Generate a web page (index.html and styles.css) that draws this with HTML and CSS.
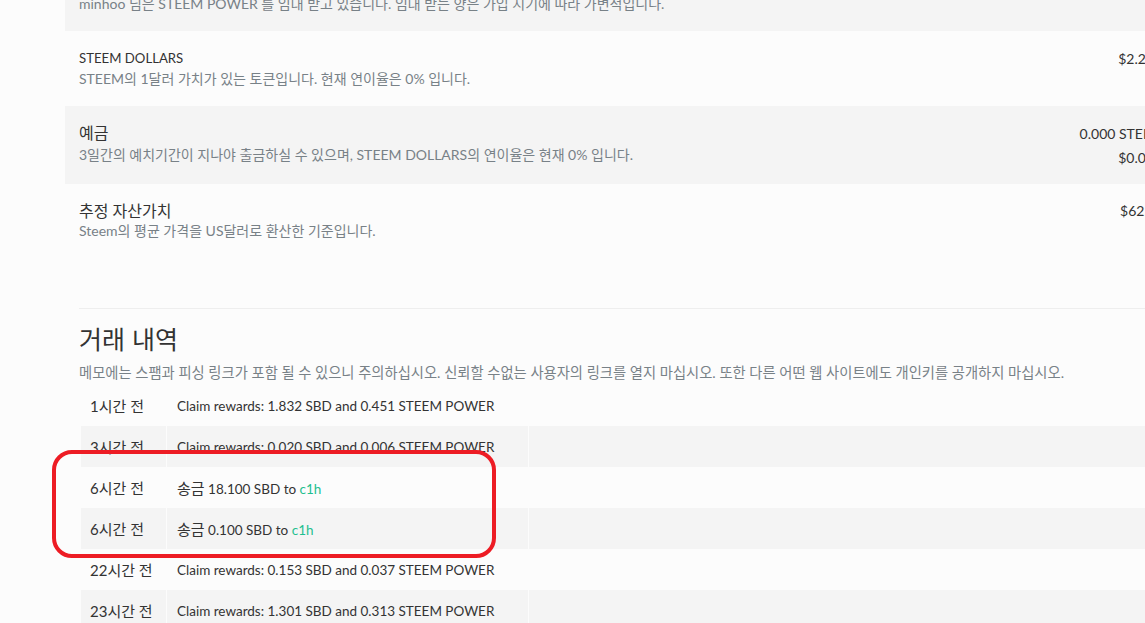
FILE: index.html
```html
<!DOCTYPE html>
<html lang="ko">
<head>
<meta charset="utf-8">
<title>Wallet</title>
<link rel="stylesheet" href="styles.css">
</head>
<body>
<div class="page">
  <section class="wallet">
    <div class="wrow gray first">
      <div class="wleft">
        <div class="wdesc">minhoo 님은 STEEM POWER 를 임대 받고 있습니다. 임대 받는 양은 가입 시기에 따라 가변적입니다.</div>
      </div>
    </div>
    <div class="wrow r2">
      <div class="wleft">
        <div class="wtitle">STEEM DOLLARS</div>
        <div class="wdesc">STEEM의 1달러 가치가 있는 토큰입니다. 현재 연이율은 0% 입니다.</div>
      </div>
      <div class="wright"><div class="val dd">$2.24</div></div>
    </div>
    <div class="wrow gray r3">
      <div class="wleft">
        <div class="wtitle ko">예금</div>
        <div class="wdesc d3">3일간의 예치기간이 지나야 출금하실 수 있으며, STEEM DOLLARS의 연이율은 현재 0% 입니다.</div>
      </div>
      <div class="wright">
        <div class="val two">0.000 STEEM</div>
        <div class="val two dd">$0.00</div>
      </div>
    </div>
    <div class="wrow r4">
      <div class="wleft">
        <div class="wtitle ko">추정 자산가치</div>
        <div class="wdesc">Steem의 평균 가격을 US달러로 환산한 기준입니다.</div>
      </div>
      <div class="wright"><div class="val">$62.35</div></div>
    </div>
  </section>

  <hr class="divider">

  <section class="history">
    <h2 class="htitle">거래 내역</h2>
    <p class="memo">메모에는 스팸과 피싱 링크가 포함 될 수 있으니 주의하십시오. 신뢰할 수없는 사용자의 링크를 열지 마십시오. 또한 다른 어떤 웹 사이트에도 개인키를 공개하지 마십시오.</p>
    <div class="twrap">
      <table class="tx">
        <tbody>
          <tr><td class="c1">1시간 전</td><td class="c2">Claim rewards: 1.832 SBD and 0.451 STEEM POWER</td><td class="c3"></td></tr>
          <tr><td class="c1">3시간 전</td><td class="c2">Claim rewards: 0.020 SBD and 0.006 STEEM POWER</td><td class="c3"></td></tr>
          <tr><td class="c1">6시간 전</td><td class="c2"><span class="ko">송금</span> 18.100 SBD to <a class="user" href="#">c1h</a></td><td class="c3"></td></tr>
          <tr><td class="c1">6시간 전</td><td class="c2"><span class="ko">송금</span> 0.100 SBD to <a class="user" href="#">c1h</a></td><td class="c3"></td></tr>
          <tr><td class="c1">22시간 전</td><td class="c2">Claim rewards: 0.153 SBD and 0.037 STEEM POWER</td><td class="c3"></td></tr>
          <tr><td class="c1">23시간 전</td><td class="c2">Claim rewards: 1.301 SBD and 0.313 STEEM POWER</td><td class="c3"></td></tr>
        </tbody>
      </table>
      <div class="annot"></div>
    </div>
  </section>
</div>
</body>
</html>
```

FILE: styles.css
```css
html, body {
  margin: 0;
  padding: 0;
  overflow: hidden;
}
body {
  background: #fcfcfc;
  font-family: "Lato", "Noto Sans CJK KR", sans-serif;
  color: #333;
  width: 1145px;
  height: 623px;
}
.page {
  margin-left: 65px;
  width: 1110px;
}
.wrow {
  display: flex;
  justify-content: space-between;
  padding: 16px 11px 14px 14px;
}
.wrow.gray { background: #f4f4f4; }
.wrow.first {
  margin-top: -6px;
  padding-top: 0;
  padding-bottom: 17px;
}
.wrow.r2 { padding-top: 17px; padding-bottom: 17px; }
.wrow.r4 { padding-top: 16px; padding-bottom: 16px; }
.wtitle {
  font-size: 13.2px;
  line-height: 21px;
  color: #333;
}
.wtitle.ko { font-size: 16px; }
.wdesc {
  font-size: 14px;
  line-height: 20px;
  color: #788187;
  white-space: nowrap;
}
.wdesc.d3 { margin-top: 2px; }
.wright {
  text-align: right;
}
.val {
  font-size: 14px;
  line-height: 21px;
  color: #333;
  white-space: nowrap;
}
.val.two { line-height: 24px; }
.val.dd { padding-right: 10px; }
.divider {
  border: 0;
  border-top: 1px solid #eeeeee;
  margin: 51px 0 0 14px;
  height: 0;
}
.history {
  padding-left: 14px;
}
.htitle {
  margin: 13px 0 0 0;
  font-family: "Noto Sans CJK KR", sans-serif;
  font-size: 25px;
  line-height: 32px;
  font-weight: 400;
  color: #333;
}
.memo {
  margin: 9px 0 0 0;
  font-size: 14.3px;
  line-height: 20px;
  color: #788187;
  white-space: nowrap;
}
.twrap {
  position: relative;
  margin-left: 1px;
  margin-top: 2px;
}
.tx {
  border-collapse: collapse;
  table-layout: fixed;
  width: 1081px;
}
.tx td {
  height: 41px;
  padding: 0;
  border-left: 1px solid #fcfcfc;
  border-right: 1px solid #fcfcfc;
  vertical-align: middle;
  color: #333;
  white-space: nowrap;
}
.tx tr:nth-child(even) td { background: #f4f4f4; }
.tx .c1 { width: 76px; padding-left: 9px; font-size: 15px; }
.tx .c2 { width: 351px; padding-left: 10px; font-size: 13.5px; }
.tx .c2 .ko { font-size: 15px; }
.user {
  color: #1fbf8f;
  text-decoration: none;
}
.annot {
  position: absolute;
  left: -28px;
  top: 65px;
  width: 444px;
  height: 108px;
  box-sizing: border-box;
  border: 4px solid #ed1c24;
  border-radius: 20px;
}
```
